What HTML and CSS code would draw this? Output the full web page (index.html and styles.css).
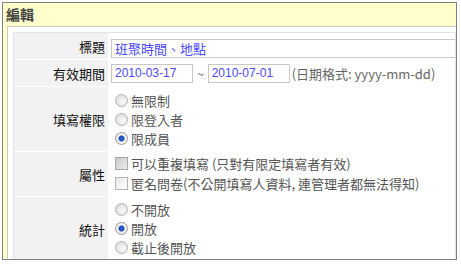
FILE: index.html
```html
<!DOCTYPE html>
<html>
<head>
    <title>編輯</title>
    <link rel="stylesheet" href="styles.css">
</head>
<body>
    <div class="box">
        <div class="box-head">編輯</div>
        <div class="box-body">
            <table class="form">
                <tr>
                    <th>標題</th>
                    <td class="r-title"><input type="text" class="text wide" value="班聚時間、地點"></td>
                </tr>
                <tr>
                    <th>有效期間</th>
                    <td class="r-date">
                        <input type="text" class="text date" value="2010-03-17">
                        <span class="tilde">~</span>
                        <input type="text" class="text date" value="2010-07-01">
                        <span class="hint">(日期格式: yyyy-mm-dd)</span>
                    </td>
                </tr>
                <tr>
                    <th>填寫權限</th>
                    <td class="r-list r-perm">
                        <label class="opt"><input type="radio" name="perm">無限制</label>
                        <label class="opt"><input type="radio" name="perm">限登入者</label>
                        <label class="opt"><input type="radio" name="perm" checked>限成員</label>
                    </td>
                </tr>
                <tr>
                    <th>屬性</th>
                    <td class="r-list r-check">
                        <label class="opt"><input type="checkbox" class="dim">可以重複填寫 (只對有限定填寫者有效)</label>
                        <label class="opt"><input type="checkbox">匿名問卷(不公開填寫人資料, 連管理者都無法得知)</label>
                    </td>
                </tr>
                <tr>
                    <th>統計</th>
                    <td class="r-list r-stat">
                        <label class="opt"><input type="radio" name="stat">不開放</label>
                        <label class="opt"><input type="radio" name="stat" checked>開放</label>
                        <label class="opt"><input type="radio" name="stat">截止後開放</label>
                    </td>
                </tr>
            </table>
        </div>
    </div>
</body>
</html>
```

FILE: styles.css
```css
body {
    margin: 2px;
    font-family: "Noto Sans CJK TC", sans-serif;
    font-size: 13px;
    color: #333;
    background-color: #fff;
}

.box {
    width: 453px;
    height: 256px;
    border: 1px solid #808080;
    background-color: #ffffcc;
    overflow: hidden;
}

.box-head {
    height: 23px;
    line-height: 23px;
    padding-left: 3px;
    font-size: 14px;
    font-weight: bold;
    color: #444;
}

.box-body {
    margin-left: 4px;
    border-top: 1px solid #c8c8c8;
    border-left: 1px solid #c8c8c8;
    background-color: #fff;
    padding: 5px 0 0 5px;
    height: 300px;
}

.form {
    width: 100%;
    border: 1px solid #e4e4e4;
    border-spacing: 0;
}

.form th {
    width: 91px;
    padding: 0 3px 0 0;
    background-color: #f2f2f2;
    border-bottom: 1px solid #fff;
    border-right: 2px solid #fff;
    text-align: right;
    font-weight: normal;
    color: #111;
}

.form td {
    padding: 0;
    border-bottom: 1px solid #fff;
    white-space: nowrap;
}

.r-title {
    padding-top: 4px !important;
    height: 22px;
    vertical-align: top;
}

.r-date {
    height: 26px;
    font-size: 0;
}

.text {
    box-sizing: border-box;
    height: 19px;
    border: 1px solid #c8c8c8;
    padding: 0 3px;
    margin: 0 0 0 1px;
    font-family: "Liberation Sans", "Noto Sans CJK TC", sans-serif;
    font-size: 12px;
    color: #4a4aff;
    vertical-align: middle;
    outline: none;
}

.wide {
    width: 344px;
    font-family: "Noto Sans CJK TC", sans-serif;
    font-size: 13px;
    border-right: none;
}

.date {
    width: 82px;
}

.tilde {
    font-size: 12px;
    color: #666;
    margin: 0 3px 0 4px;
    vertical-align: middle;
}

.hint {
    font-size: 13px;
    color: #666;
    margin-left: 2px;
    vertical-align: middle;
}

.r-list {
    vertical-align: top;
}

.r-perm {
    padding: 4px 0 3px 0 !important;
}

.r-check {
    padding: 1px 0 3px 0 !important;
}

.r-stat {
    padding: 3px 0 4px 0 !important;
}

.opt {
    display: flex;
    align-items: center;
    height: 19px;
    padding-left: 5px;
    color: #555;
}

.r-check .opt {
    height: 20px;
}

.opt input {
    appearance: none;
    -webkit-appearance: none;
    box-sizing: border-box;
    width: 13px;
    height: 13px;
    margin: 0 3px 0 0;
    border: 1px solid #b4b4b4;
}

.opt input[type="radio"] {
    border-radius: 50%;
    background: radial-gradient(circle at 60% 60%, #fafafa 0, #e6e6e6 55%, #cfcfcf 100%);
}

.opt input[type="radio"]:checked {
    border-color: #9a9a9a;
    background: radial-gradient(circle, #2a6edb 0, #1848b0 2.5px, #f4f4f4 3.5px, #e2e2e2 100%);
}

.opt input[type="checkbox"] {
    background: linear-gradient(135deg, #e8e8e8, #ffffff);
}

.opt input.dim {
    background: linear-gradient(135deg, #c8c8c8, #ececec);
    border-color: #a8a8a8;
}
```
